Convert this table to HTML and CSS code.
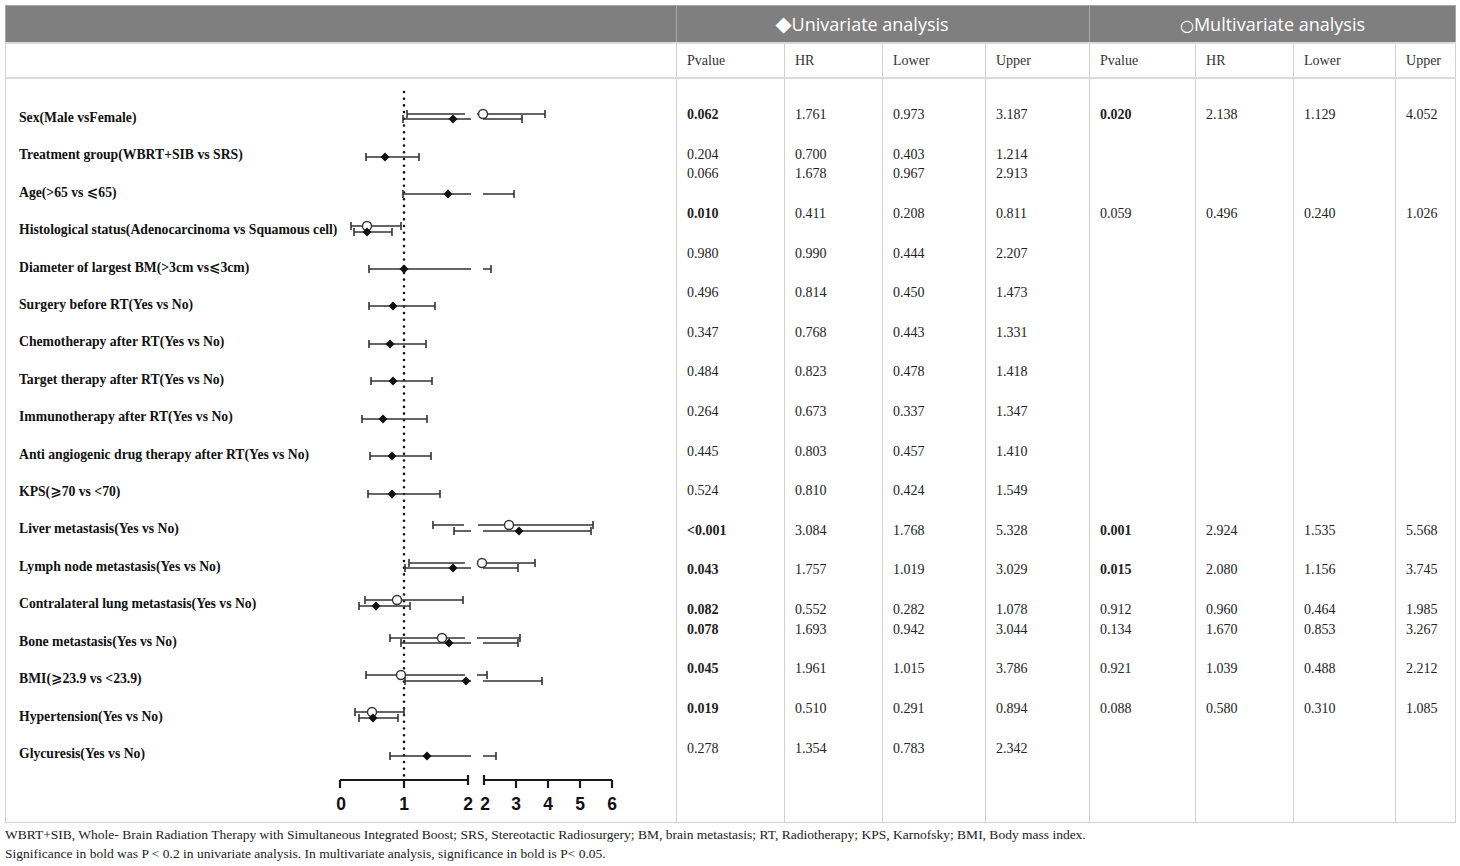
FILE: index.html
```html
<!DOCTYPE html>
<html lang="en">
<head>
  <meta charset="UTF-8">
  <title>Cox regression - forest plot</title>
  <link rel="stylesheet" href="styles.css">
</head>
<body>
  <table class="results">
    <colgroup>
      <col class="c-var">
      <col class="c-p"><col class="c-hr"><col class="c-lo"><col class="c-up">
      <col class="c-p2"><col class="c-hr2"><col class="c-lo2"><col>
    </colgroup>
    <thead>
      <tr class="group">
        <th></th>
        <th colspan="4" class="uni"><span class="mark">◆</span>Univariate analysis</th>
        <th colspan="4"><span class="mark ring">○</span>Multivariate analysis</th>
      </tr>
      <tr class="sub">
        <th></th>
        <th>Pvalue</th><th>HR</th><th>Lower</th><th>Upper</th>
        <th>Pvalue</th><th>HR</th><th>Lower</th><th>Upper</th>
      </tr>
    </thead>
    <tbody>
      <tr>
        <td class="plot-cell">
          <div class="forest">
            <ul class="labels">
              <li>Sex(Male vsFemale)</li>
              <li>Treatment group(WBRT+SIB vs SRS)</li>
              <li>Age(&gt;65 vs ⩽65)</li>
              <li>Histological status(Adenocarcinoma vs Squamous cell)</li>
              <li>Diameter of largest BM(&gt;3cm vs⩽3cm)</li>
              <li>Surgery before RT(Yes vs No)</li>
              <li>Chemotherapy after RT(Yes vs No)</li>
              <li>Target therapy after RT(Yes vs No)</li>
              <li>Immunotherapy after RT(Yes vs No)</li>
              <li>Anti angiogenic drug therapy after RT(Yes vs No)</li>
              <li>KPS(⩾70 vs &lt;70)</li>
              <li>Liver metastasis(Yes vs No)</li>
              <li>Lymph node metastasis(Yes vs No)</li>
              <li>Contralateral lung metastasis(Yes vs No)</li>
              <li>Bone metastasis(Yes vs No)</li>
              <li>BMI(⩾23.9 vs &lt;23.9)</li>
              <li>Hypertension(Yes vs No)</li>
              <li>Glycuresis(Yes vs No)</li>
            </ul>
            <svg class="plot" width="300" height="743" viewBox="335 77 300 743">
              <defs>
                <path id="dia" d="M-4.5 0L0-4.5L4.5 0L0 4.5Z"/>
              </defs>
              <!-- reference line at HR = 1 -->
              <line class="ref" x1="404" y1="90" x2="404" y2="775"/>

              <!-- sex -->
              <path class="ci" d="M407 112H465M477 112H545M407 108V116M545 108V116"/>
              <circle class="multi" cx="483" cy="112" r="4.5"/>
              <path class="ci" d="M403 117H471M483 117H522M403 113V121M522 113V121"/>
              <use class="uni" href="#dia" x="453" y="117"/>
              <!-- treatment group -->
              <path class="ci" d="M366 155H419M366 151V159M419 151V159"/>
              <use class="uni" href="#dia" x="385" y="155"/>
              <!-- age -->
              <path class="ci" d="M403 192H471M483 192H514M403 188V196M514 188V196"/>
              <use class="uni" href="#dia" x="448" y="192"/>
              <!-- histology -->
              <path class="ci" d="M351 224H401M351 220V228M401 220V228"/>
              <circle class="multi" cx="367" cy="224" r="4.5"/>
              <path class="ci" d="M354 230H392M354 226V234M392 226V234"/>
              <use class="uni" href="#dia" x="367" y="230"/>
              <!-- diameter -->
              <path class="ci" d="M369 267H471M483 267H491M369 263V271M491 263V271"/>
              <use class="uni" href="#dia" x="404" y="267"/>
              <!-- surgery -->
              <path class="ci" d="M369 304H435M369 300V308M435 300V308"/>
              <use class="uni" href="#dia" x="393" y="304"/>
              <!-- chemotherapy -->
              <path class="ci" d="M369 342H426M369 338V346M426 338V346"/>
              <use class="uni" href="#dia" x="390" y="342"/>
              <!-- target therapy -->
              <path class="ci" d="M371 379H432M371 375V383M432 375V383"/>
              <use class="uni" href="#dia" x="393" y="379"/>
              <!-- immunotherapy -->
              <path class="ci" d="M362 417H427M362 413V421M427 413V421"/>
              <use class="uni" href="#dia" x="383" y="417"/>
              <!-- anti angiogenic -->
              <path class="ci" d="M370 454H431M370 450V458M431 450V458"/>
              <use class="uni" href="#dia" x="392" y="454"/>
              <!-- kps -->
              <path class="ci" d="M368 492H440M368 488V496M440 488V496"/>
              <use class="uni" href="#dia" x="392" y="492"/>
              <!-- liver -->
              <path class="ci" d="M433 523H464M478 523H593M433 519V527M593 519V527"/>
              <circle class="multi" cx="509" cy="523" r="4.5"/>
              <path class="ci" d="M454 529H471M483 529H591M454 525V533M591 525V533"/>
              <use class="uni" href="#dia" x="519" y="529"/>
              <!-- lymph node -->
              <path class="ci" d="M409 561H465M478 561H535M409 557V565M535 557V565"/>
              <circle class="multi" cx="482" cy="561" r="4.5"/>
              <path class="ci" d="M405 566H471M483 566H518M405 562V570M518 562V570"/>
              <use class="uni" href="#dia" x="453" y="566"/>
              <!-- contralateral lung -->
              <path class="ci" d="M365 598H463M365 594V602M463 594V602"/>
              <circle class="multi" cx="397" cy="598" r="4.5"/>
              <path class="ci" d="M359 604H410M359 600V608M410 600V608"/>
              <use class="uni" href="#dia" x="376" y="604"/>
              <!-- bone -->
              <path class="ci" d="M390 636H465M477 636H520M390 632V640M520 632V640"/>
              <circle class="multi" cx="442" cy="636" r="4.5"/>
              <path class="ci" d="M401 641H471M483 641H518M401 637V645M518 637V645"/>
              <use class="uni" href="#dia" x="449" y="641"/>
              <!-- bmi -->
              <path class="ci" d="M366 673H465M477 673H487M366 669V677M487 669V677"/>
              <circle class="multi" cx="401" cy="673" r="4.5"/>
              <path class="ci" d="M405 679H471M483 679H542M405 675V683M542 675V683"/>
              <use class="uni" href="#dia" x="466" y="679"/>
              <!-- hypertension -->
              <path class="ci" d="M355 710H404M355 706V714M404 706V714"/>
              <circle class="multi" cx="372" cy="710" r="4.5"/>
              <path class="ci" d="M359 716H398M359 712V720M398 712V720"/>
              <use class="uni" href="#dia" x="373" y="716"/>
              <!-- glycuresis -->
              <path class="ci" d="M390 754H471M483 754H496M390 750V758M496 750V758"/>
              <use class="uni" href="#dia" x="427" y="754"/>

              <!-- broken x axis -->
              <path class="axis" d="M340 778H468M340 778V786M404 778V786M468 773V783M484 778H612M484 773V783M516 778V786M548 778V786M580 778V786M612 778V786"/>
              <g class="ticks">
                <text x="341" y="808">0</text>
                <text x="404" y="808">1</text>
                <text x="468" y="808">2</text>
                <text x="485" y="808">2</text>
                <text x="516" y="808">3</text>
                <text x="548" y="808">4</text>
                <text x="580" y="808">5</text>
                <text x="612" y="808">6</text>
              </g>
            </svg>
          </div>
        </td>
<td class="vals"><b>0.062</b>

0.204
0.066

<b>0.010</b>

0.980

0.496

0.347

0.484

0.264

0.445

0.524

<b>&lt;0.001</b>

<b>0.043</b>

<b>0.082</b>
<b>0.078</b>

<b>0.045</b>

<b>0.019</b>

0.278</td>
<td class="vals">1.761

0.700
1.678

0.411

0.990

0.814

0.768

0.823

0.673

0.803

0.810

3.084

1.757

0.552
1.693

1.961

0.510

1.354</td>
<td class="vals">0.973

0.403
0.967

0.208

0.444

0.450

0.443

0.478

0.337

0.457

0.424

1.768

1.019

0.282
0.942

1.015

0.291

0.783</td>
<td class="vals">3.187

1.214
2.913

0.811

2.207

1.473

1.331

1.418

1.347

1.410

1.549

5.328

3.029

1.078
3.044

3.786

0.894

2.342</td>
<td class="vals"><b>0.020</b>




0.059















<b>0.001</b>

<b>0.015</b>

0.912
0.134

0.921

0.088</td>
<td class="vals">2.138




0.496















2.924

2.080

0.960
1.670

1.039

0.580</td>
<td class="vals">1.129




0.240















1.535

1.156

0.464
0.853

0.488

0.310</td>
<td class="vals">4.052




1.026















5.568

3.745

1.985
3.267

2.212

1.085</td>
      </tr>
    </tbody>
  </table>

  <p class="note">WBRT+SIB, Whole- Brain Radiation Therapy with Simultaneous Integrated Boost; SRS, Stereotactic Radiosurgery; BM, brain metastasis; RT, Radiotherapy; KPS, Karnofsky; BMI, Body mass index.<br>Significance in bold was P &lt; 0.2 in univariate analysis. In multivariate analysis, significance in bold is P&lt; 0.05.</p>
</body>
</html>
```

FILE: styles.css
```css
body {
  margin: 0;
  padding: 5px 5px 0;
  font-family: "Liberation Serif", "DejaVu Serif", serif;
  color: #222;
  background: #fff;
}

.results {
  border-collapse: collapse;
  table-layout: fixed;
  width: 1451px;
}
.results th,
.results td {
  border: 1px solid #d0d0d0;
  padding: 0 10px;
  text-align: left;
  vertical-align: middle;
}
.c-var { width: 671px; }
.c-p { width: 108px; }
.c-hr { width: 98px; }
.c-lo { width: 103px; }
.c-up { width: 104px; }
.c-p2 { width: 106px; }
.c-hr2 { width: 98px; }
.c-lo2 { width: 102px; }

/* grey group header */
.group th {
  height: 36px;
  background: #7f7f7f;
  border-color: #a8a8a8;
  color: #fff;
  font-family: "Open Sans", "DejaVu Sans", sans-serif;
  font-weight: 400;
  font-size: 18px;
  text-align: center;
}
.group th.uni {
  padding-right: 52px;
}
.mark {
  font-family: "DejaVu Sans", sans-serif;
  font-size: 21px;
  line-height: 1;
}
.mark.ring {
  font-size: 16px;
}

.sub th {
  height: 33px;
  font-weight: 400;
  font-size: 14px;
  color: #333;
}
.sub th,
.results tbody td {
  border-top: 2px solid #dadada;
}

/* forest plot cell */
.results td.plot-cell {
  padding: 0;
  vertical-align: top;
}
.forest {
  display: flex;
}
.labels {
  list-style: none;
  margin: 0;
  padding: 20px 0 0 13px;
  width: 316px;
  white-space: nowrap;
  font-family: "Liberation Serif", "DejaVu Serif", "DejaVu Sans", serif;
  font-weight: 700;
  font-size: 13.7px;
  line-height: 37.4px;
  color: #111;
}
.plot {
  display: block;
  flex: none;
}
.plot .ref {
  stroke: #111;
  stroke-width: 2.6;
  stroke-linecap: round;
  stroke-dasharray: 0 6.7;
}
.plot .ci {
  fill: none;
  stroke: #333;
  stroke-width: 1.6;
}
.plot .uni {
  fill: #111;
}
.plot .multi {
  fill: #fff;
  stroke: #333;
  stroke-width: 1.4;
}
.plot .axis {
  fill: none;
  stroke: #1a1a1a;
  stroke-width: 2.2;
}
.plot .ticks text {
  font-family: "Liberation Sans", Arial, sans-serif;
  font-weight: 700;
  font-size: 17.5px;
  fill: #111;
  text-anchor: middle;
}

/* numeric columns */
.results td.vals {
  vertical-align: top;
  padding: 26px 10px 0;
  white-space: pre-line;
  font-size: 14px;
  line-height: 19.8px;
  color: #222;
}

.note {
  margin: 2px 0 0;
  font-size: 13.5px;
  line-height: 19px;
  color: #222;
}
```
